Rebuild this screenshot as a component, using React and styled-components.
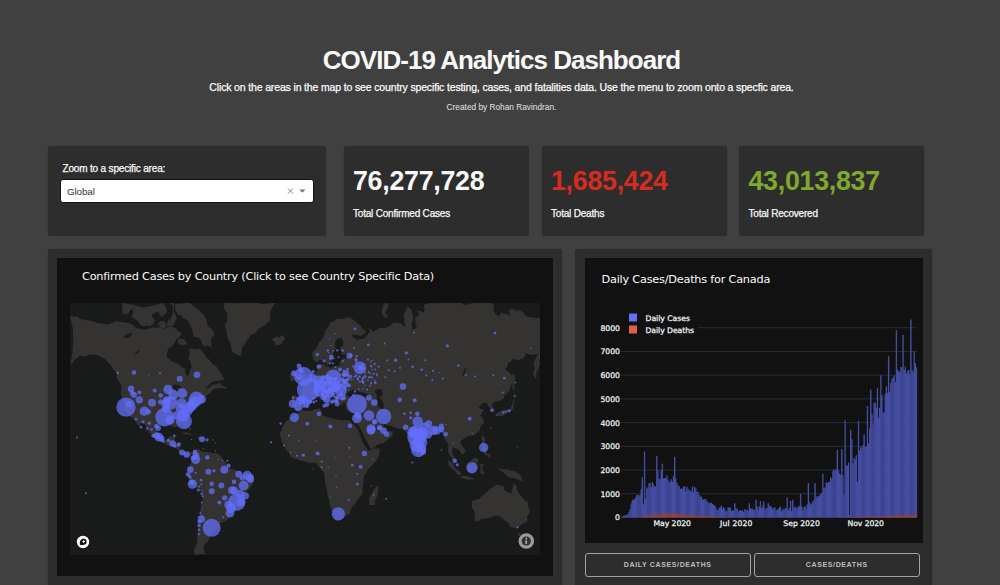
import React from 'react';
import styled, { createGlobalStyle } from 'styled-components';

const Global = createGlobalStyle`
  * { box-sizing: border-box; }
  html, body { margin: 0; padding: 0; background: #404040; overflow: hidden; }
  h1, h2, p { margin: 0; font-weight: normal; }
`;

const Page = styled.main`
  width: 1000px;
  height: 585px;
  overflow: hidden;
  padding: 45px 0 0 47.5px;
  background: #404040;
  color: #f9f9f9;
  font-family: 'Liberation Sans', Arial, sans-serif;
`;
const Header = styled.header`
  display: flex;
  flex-direction: column;
  align-items: center;
  width: 908px;
  height: 101px;
  white-space: nowrap;
`;
const Title = styled.h1`
  font-size: 26px;
  line-height: 30px;
  font-weight: bold;
  letter-spacing: -0.98px;
`;
const Subtitle = styled.p`
  margin-top: 6px;
  font-size: 10.5px;
  line-height: 13px;
  letter-spacing: -0.15px;
  -webkit-text-stroke: 0.25px #f9f9f9;
`;
const Credit = styled.p`
  margin-top: 8px;
  font-size: 8.3px;
  line-height: 10px;
  color: #e4e4e4;
`;
const Summary = styled.section`
  display: flex;
  height: 102.5px;
`;
const Card = styled.div`
  width: ${p => p.$w}px;
  height: 90px;
  margin-right: ${p => p.$gap || 0}px;
  background: #2d2d2d;
  border-radius: 3px;
  box-shadow: 0 0 1px #262626;
`;
const FilterCard = styled(Card)`
  padding: 16px 12px;
`;
const Label = styled.label`
  display: block;
  padding-left: 3px;
  height: 17px;
  font-size: 10px;
  line-height: 13px;
  letter-spacing: -0.17px;
  -webkit-text-stroke: 0.25px #f9f9f9;
`;
const Select = styled.div`
  display: flex;
  align-items: center;
  height: 24px;
  padding: 0 7px 0 6.5px;
  color: #333;
  background: #fff;
  border: 1px solid #151515;
  border-radius: 3px;
  font-size: 9.8px;
  letter-spacing: -0.1px;
`;
const SelectValue = styled.span`
  flex: 1;
`;
const StatCard = styled(Card)`
  padding: 20px 9.5px;
  color: ${p => p.$color};
`;
const Number = styled.p`
  font-size: 26.8px;
  line-height: 30px;
  font-weight: bold;
  letter-spacing: -0.28px;
`;
const Caption = styled.p`
  margin-top: 12px;
  font-size: 10px;
  line-height: 12px;
  letter-spacing: -0.2px;
  color: #f9f9f9;
  -webkit-text-stroke: 0.25px #f9f9f9;
`;
const Panels = styled.section`
  display: flex;
  gap: 13px;
`;
const Panel = styled.div`
  width: ${p => p.$w}px;
  height: 345px;
  padding: 9.5px;
  background: #2d2d2d;
  border-radius: 3px;
  box-shadow: 0 0 1px #262626;
`;
const Plot = styled.div`
  width: ${p => p.$w}px;
  height: ${p => p.$h}px;
  background: #111;
  font-family: 'DejaVu Sans', Verdana, sans-serif;
`;
const PlotTitle = styled.h2`
  height: ${p => p.$h}px;
  padding: ${p => p.$pad};
  font-size: ${p => p.$size}px;
  line-height: 14px;
  letter-spacing: ${p => p.$ls}px;
  white-space: nowrap;
`;
const MapFrame = styled.div`
  padding-left: 13px;
  svg { display: block; }
`;
const ChartSvg = styled.svg`
  display: block;
`;
const ButtonRow = styled.div`
  display: flex;
  gap: 2.5px;
  margin-top: 9.5px;
`;
const Button = styled.button`
  width: 166.5px;
  height: 24.5px;
  padding: 0;
  background: transparent;
  border: 1px solid #a2a2a2;
  border-radius: 3px;
  color: #bdbdbd;
  font: bold 7px 'Liberation Sans', Arial, sans-serif;
  letter-spacing: 0.63px;
  text-transform: uppercase;
`;

const random = seed => () => {
  seed = (seed * 1664525 + 1013904223) % 4294967296;
  return seed / 4294967296;
};

// Breaks each straight segment into small irregular coast steps.
const coast = (text, rough = 0.14) => {
  const rnd = random(text.length * 77);
  let pts = text.trim().split(/\s+/).map(p => p.split(',').map(parseFloat));
  for (let n = 0; n < 2; n++) {
    const out = [];
    pts.forEach((a, i) => {
      const b = pts[(i + 1) % pts.length];
      const k = (rnd() - 0.5) * 2 * rough;
      out.push(a, [(a[0] + b[0]) / 2 - (b[1] - a[1]) * k, (a[1] + b[1]) / 2 + (b[0] - a[0]) * k]);
    });
    pts = out;
  }
  return 'M' + pts.map(p => p[0].toFixed(1) + ' ' + p[1].toFixed(1)).join('L') + 'Z';
};

const WEST_LAND = [
  '90,212 110,212 130,222 165,230 200,238 230,226 265,232 290,248 340,245 370,250 400,245 425,262 410,280 385,310 380,335 400,350 435,368 440,395 455,365 448,310 480,310 500,338 525,360 545,385 552,402 520,408 497,430 540,412 562,428 520,432 500,450 480,460 460,485 440,515 448,548 440,550 425,537 405,545 380,535 360,540 350,560 362,578 378,585 390,570 405,573 400,590 418,595 422,615 440,623 460,620 460,628 435,633 420,618 400,602 370,590 340,575 322,550 305,530 300,540 322,560 315,555 296,540 285,525 255,495 247,460 245,430 235,405 230,380 210,355 185,335 150,328 125,330 100,350 90,362',
  '460,613 475,610 490,620 510,620 530,623 550,645 570,660 570,670 605,680 640,695 638,715 620,735 615,760 590,785 570,810 560,825 540,835 540,850 520,860 510,870 505,885 495,895 490,910 495,928 465,928 463,910 472,885 475,845 480,805 485,775 485,745 460,720 442,690 450,655 460,635',
  '245,172 248,205 262,205 280,188 275,215 300,238 330,242 345,225 335,212 352,198 365,215 378,205 372,172',
  '388,172 398,180 396,210 385,225 375,238 400,240 410,220 405,205 402,172',
  '405,175 450,172 470,190 482,200 500,230 523,262 512,282 515,305 490,302 480,280 460,272 455,250 435,220 412,208',
  '355,230 375,228 380,245 362,248',
  '415,278 435,282 442,297 425,300 412,292',
  '550,172 705,172 690,200 690,225 655,250 640,265 620,285 602,332 585,325 570,290 560,260 555,235 562,205',
  '695,280 708,272 715,276 728,268 736,280 725,295 708,300',
  '426,562 445,562 465,570 445,568',
  '472,575 492,575 495,581 474,581',
];
const EAST_LAND = [
  '98,205 97,185 112,168 128,145 140,115 152,95 175,85 205,80 225,92 245,110 256,118 256,130 240,138 215,132 230,148 252,145 270,125 268,108 280,125 300,112 330,105 345,96 360,98 378,110 370,75 380,50 395,58 400,85 396,118 410,112 404,80 418,72 408,60 430,65 432,42 460,38 545,37 560,45 600,37 640,40 645,68 655,80 665,65 690,75 690,55 720,58 735,75 780,82 783,195 775,235 768,265 760,255 762,215 772,190 738,188 730,205 700,205 675,238 702,257 690,300 665,330 640,335 635,348 645,362 632,365 622,340 605,338 596,350 612,358 600,375 612,395 600,418 580,435 550,445 540,455 558,480 545,495 530,475 520,470 518,490 532,517 510,495 505,460 490,435 475,420 440,440 430,495 415,500 395,480 380,430 360,415 320,405 298,392 315,415 338,422 335,440 300,460 270,475 245,440 222,400 226,370 200,360 195,335 180,345 165,325 145,310 160,340 140,345 125,320 95,325 80,350 50,360 35,350 35,315 65,318 70,290 55,280 75,272 100,255 112,240 110,225 130,220 140,230 155,215 142,225 132,200 112,215',
  '50,220 65,225 80,255 88,272 60,280 60,250',
  '30,250 48,245 50,265 32,272',
  '310,40 325,37 325,50 315,65 325,78 318,83 305,70',
  '645,372 660,362 685,358 698,335 705,315 713,315 702,335 698,358 680,368 655,378',
  '698,250 706,255 704,300 698,295',
];
const SEAS = [
  '170,145 185,142 190,155 180,175 184,190 212,192 215,198 188,204 178,225 150,233 142,225 155,210 160,190 165,165',
  '200,310 220,298 240,305 258,310 278,318 268,324 230,318 205,322',
  '285,300 305,297 308,315 298,318 312,345 308,358 295,350 290,325',
];
const SOUTH_LAND = [
  '337,300 375,280 390,265 410,252 435,255 432,268 455,280 460,248 475,275 505,305 510,330 500,365 475,383 450,378 440,362 420,348 385,352 345,363 345,340 335,320',
  '473,397 487,397 478,408',
  '412,205 430,207 450,210 470,215 485,235 497,243 475,238 450,232 432,218',
  '320,190 345,170 357,178 350,205 340,218 322,210',
  '255,173 280,190 305,222 295,225 270,200',
  '302,228 342,234 340,238 302,232',
  '358,190 378,192 366,198 375,220 362,220',
  '365,108 375,110 372,130 380,160 392,162 388,172 372,160 364,130',
  '55,255 55,275 45,312 28,314 27,295 38,275',
  '365,93 370,90 369,102',
];
const AFRICA = '290,417 302,410 320,408 322,415 333,418 350,420 355,425 362,440 368,450 380,448 379,455 372,465 364,475 363,492 357,500 350,513 342,519 335,520 332,510 327,490 324,472 316,462 300,460 290,455 282,442 280,433 285,422';

const AMERICAS = [[173,37,4],[222,36,7],[266,43,2],[300,38,3],[359,55,9],[411,43,10],[213,85,10],[222,103,9],[216,97,7],[238,96,6],[238,118,11],[198,140,29],[208,131,10],[284,90,6],[302,105,7],[276,127,12],[302,124,8],[253,152,14],[265,154,8],[324,87,14],[340,103,15],[367,98,15],[332,127,20],[318,130,14],[320,120,12],[314,170,28],[330,178,14],[365,128,15],[362,145,15],[380,150,18],[372,182,24],[370,165,18],[395,135,16],[409,115,22],[425,116,13],[402,125,18],[390,140,16],[350,165,12],[318,145,12],[228,176,4],[249,184,5],[268,188,5],[262,204,4],[275,207,4],[289,197,7],[295,203,8],[243,200,4],[297,230,13],[290,225,10],[305,235,9],[280,226,6],[325,240,5],[343,226,4],[338,249,10],[344,257,5],[356,252,7],[366,276,9],[380,282,10],[310,243,4],[391,205,2],[395,237,2],[426,236,9],[441,238,5],[458,238,2],[465,247,2],[466,271,2],[430,265,2],[51,231,3],[78,398,3],[633,245,3],[405,275,7],[408,285,10],[407,297,14],[400,292,8],[442,291,7],[391,327,10],[384,342,7],[390,350,5],[397,371,14],[395,365,8],[445,334,9],[462,331,5],[493,328,12],[506,315,6],[488,300,2],[502,301,3],[475,297,2],[407,337,3],[423,359,4],[424,372,3],[455,370,7],[455,392,9],[484,375,9],[536,341,10],[562,345,14],[570,352,12],[572,358,10],[547,352,8],[522,364,7],[551,375,15],[516,389,12],[523,390,11],[540,400,12],[556,406,11],[530,425,26],[543,425,13],[505,433,12],[513,443,15],[510,458,13],[494,412,8],[478,426,6],[425,400,4],[428,407,3],[415,389,4],[417,378,3],[427,390,2],[425,426,3],[426,445,2],[421,458,3],[424,475,11],[455,502,27],[418,484,6],[417,495,5],[417,508,4],[417,521,3],[490,470,3]];
const EURASIA = [[225,115,4],[265,163,4],[314,159,3],[402,126,3],[165,129,2],[148,145,2],[153,165,2],[222,172,3],[188,180,4],[112,192,5],[154,200,7],[208,196,9],[213,195,5],[132,211,5],[57,226,7],[117,228,7],[180,237,6],[198,247,9],[240,232,19],[242,232,9],[379,187,5],[347,209,5],[322,209,3],[385,207,3],[436,209,3],[502,166,5],[645,128,4],[753,174,2],[535,225,4],[398,229,4],[344,242,3],[360,232,3],[425,238,4],[459,241,3],[477,247,2],[439,255,3],[457,269,3],[488,264,3],[557,254,3],[585,258,3],[640,254,3],[673,263,4],[706,276,3],[780,220,2],[658,284,1.5],[668,306,3],[703,316,3],[369,288,10],[359,328,7],[404,329,6],[636,359,5],[687,361,5],[670,366,4],[677,364,3],[650,373,2],[569,385,6],[326,239,3],[316,260,3],[70,257,28],[57,260,9],[42,248,9],[62,240,8],[85,298,34],[160,260,23],[97,262,12],[115,270,15],[120,285,18],[118,300,18],[140,270,15],[145,290,20],[165,290,15],[182,299,18],[150,310,12],[135,310,12],[172,285,15],[195,280,10],[140,325,12],[187,320,10],[171,341,7],[130,320,9],[133,346,6],[38,340,12],[55,350,12],[60,330,13],[75,330,10],[68,322,8],[40,322,4],[85,335,8],[43,381,14],[117,370,7],[82,400,6],[151,408,6],[210,406,7],[231,341,30],[267,322,9],[283,336,10],[267,375,16],[311,378,23],[231,383,15],[234,375,10],[284,394,7],[273,415,14],[299,411,7]];
const MIDDLE = [[303,270,13],[314,244,8],[329,262,8],[341,271,10],[350,281,8],[407,260,8],[403,220,4],[422,217,4],[442,220,7],[422,232,5],[283,339,8],[272,379,6],[247,374,4],[238,322,3],[143,339,6],[100,344,5],[81,346,3],[62,336,2],[57,285,3],[87,300,2],[42,315,3],[32,249,4],[3,305,2],[155,380,3],[155,363,3],[175,380,2],[140,300,1.5],[197,350,1.5],[240,349,2],[308,323,1.5],[443,243,16],[463,262,16],[476,250,11],[437,275,20],[440,290,28],[455,280,20],[428,275,16],[450,305,22],[445,328,22],[455,325,14],[460,335,8],[474,283,12],[490,270,14],[500,270,13],[514,257,8],[527,281,7],[515,267,8],[427,366,3],[440,315,20],[515,328,1.5],[205,520,20],[262,431,4],[180,470,2],[200,440,2],[236,478,3],[262,400,3],[130,385,2],[198,405,2]];
const SOUTH = [[38,176,2],[34,256,2],[41,283,3],[79,295,3],[284,181,7],[292,193,5],[336,202,17],[371,141,14],[472,139,2],[392,82,2],[337,98,2],[280,128,2],[244,149,2],[259,72,2],[473,380,3],[500,358,2]];

const scatter = (seed, count, x, y, w, h, r0, r1) => {
  const rnd = random(seed);
  return Array.from({ length: count }, () => [x + (rnd() + rnd()) / 2 * w, y + (rnd() + rnd()) / 2 * h, r0 + rnd() * (r1 - r0)]);
};
const SMALL = [
  ...scatter(11, 60, 95, 235, 130, 115, 3, 7),
  ...scatter(29, 45, 180, 195, 120, 115, 2, 4),
  ...scatter(5, 22, 225, 190, 90, 125, 2, 3.5),
  ...scatter(47, 12, 120, 165, 60, 70, 2, 4),
  ...scatter(61, 18, 35, 310, 75, 45, 3, 6),
];

const Bubbles = ({ at, data }) => (
  <g transform={`translate(${at}) scale(0.33333)`} fill="#636efa" fillOpacity="0.74">
    {data.map(([x, y, r], i) => <circle key={i} cx={x} cy={y} r={r} />)}
  </g>
);
const Land = ({ at, shapes, fill = '#343332' }) => (
  <g transform={`translate(${at}) scale(0.33333)`} fill={fill}>
    {shapes.map((s, i) => <path key={i} d={coast(s)} />)}
  </g>
);

const WorldMap = () => (
  <svg width="470" height="252" viewBox="70 302.5 470 252">
    <rect x="70" y="302" width="471" height="253" fill="#191a1a" />
    <Land at="40 245" shapes={WEST_LAND} />
    <Land at="280 290" shapes={EAST_LAND} />
    <path d={coast(AFRICA, 0.1)} fill="#343332" />
    <Land at="280 290" shapes={SEAS} fill="#191a1a" />
    <path d="M356 423 361 432 369 448" stroke="#191a1a" strokeWidth="2.6" fill="none" />
    <Land at="360 400" shapes={SOUTH_LAND} />
    <g fill="#191a1a">
      <path d="M123 336l8-4 1 2-4 4zM134 353l5-3 1 1-3 2zM171 387l4-3 5 1 2 3-4-1-1 5-2-3z" />
      <path d="M462 375l3-8 1 1-2 7z" />
    </g>
    <Bubbles at="60 360" data={AMERICAS} />
    <Bubbles at="280 290" data={EURASIA} />
    <Bubbles at="280 290" data={SMALL} />
    <Bubbles at="270 340" data={MIDDLE} />
    <Bubbles at="360 400" data={SOUTH} />
    <circle cx="83" cy="541.5" r="6.2" fill="#fff" />
    <path d="M80 544.3c-.6-3.6.8-6 3.6-6a3 3 0 0 1 0 6c-1.200.3-2.400.2-3.600 0z" fill="#111" />
    <path d="M83.700 539.300l.6 1.300 1.300.6-1.300.6-.6 1.300-.6-1.300-1.300-.6 1.300-.6z" fill="#fff" />
    <circle cx="526.300" cy="540.500" r="7.800" fill="#9b9b9b" />
    <circle cx="526.300" cy="540.500" r="4.600" fill="#303030" />
    <circle cx="526.300" cy="538" r="0.9" fill="#aaa" />
    <path d="M525.300 539.800h1.800v3.600h-1.800z" fill="#aaa" />
  </svg>
);

const ENVELOPE = [[155,40],[175,150],[185,620],[210,1050],[240,1350],[270,1550],[290,1600],[310,1650],[340,1200],[375,1180],[400,800],[440,420],[500,300],[540,350],[600,400],[640,350],[690,370],[720,520],[745,950],[775,1450],[795,1950],[820,1950],[860,2500],[890,3000],[900,3900],[920,4500],[945,4850],[965,5650],[980,6000],[1000,6250],[1020,6150],[1041,6500]];
const PEAKS = [[216,1700],[225,2780],[221,550],[228,800],[260,2600],[264,2000],[278,2270],[273,2000],[313,2560],[493,600],[537,600],[558,750],[571,700],[582,680],[593,600],[651,850],[660,700],[669,750],[690,1000],[716,1450],[736,1450],[757,1850],[802,2850],[814,2880],[827,4100],[843,3700],[847,3300],[867,4080],[883,3500],[902,5400],[893,4700],[921,5450],[912,4850],[934,6000],[957,6800],[969,5900],[978,7900],[1000,7700],[1023,8350],[1032,7000],[838,100],[823,950],[863,1500]];
const DAYS = (() => {
  const rnd = random(42);
  const step = 886 / 265;
  const list = Array.from({ length: 265 }, (_, i) => {
    const x = 155 + (i + 0.5) * step;
    let j = 0;
    while (j < ENVELOPE.length - 2 && ENVELOPE[j + 1][0] < x) j++;
    const [a, va] = ENVELOPE[j], [b, vb] = ENVELOPE[j + 1];
    const spread = x > 440 && x < 720 ? 0.6 : x > 950 ? 0.08 : 0.22;
    return (va + (vb - va) * Math.min(1, (x - a) / (b - a))) * (1 + (rnd() - 0.5) * spread);
  });
  PEAKS.forEach(([x, v]) => { list[Math.min(264, Math.floor((x - 155) / step))] = v; });
  return list;
})();
const deaths = i => {
  if (i < 18) return 0;
  const wave = 150 * Math.exp(-(((i - 42) / 22) ** 2)) + 35 * Math.exp(-(((i - 75) / 15) ** 2));
  return wave * (0.7 + ((i * 37) % 11) / 16) + Math.max(0, i - 195) * 1.45 + 4;
};
const X0 = 621.7, BASE = 518, UNIT = 0.02372, STEP = 295.3 / 265;

const DailyChart = () => (
  <ChartSvg width="338" height="245" viewBox="585 298.5 338 245" fontFamily="'DejaVu Sans', Verdana, sans-serif" fontSize="7.7" fill="#f2f5fa">
    {[0,1,2,3,4,5,6,7,8].map(n => (
      <g key={n}>
        <path d={`M${n === 8 ? 698 : 621} ${BASE - n * 1000 * UNIT}H917`} stroke="#232d38" strokeWidth="1" />
        <text x="620" y={BASE - n * 1000 * UNIT + 2.9} textAnchor="end" stroke="#f2f5fa" strokeWidth="0.25">{n * 1000}</text>
      </g>
    ))}
    {DAYS.map((v, i) => <rect key={i} x={X0 + i * STEP - 0.1} y={BASE - v * UNIT} width={STEP + 0.25} height={v * UNIT} fill={i % 2 ? '#4750a8' : '#434b9f'} />)}
    {DAYS.map((v, i) => <rect key={i} x={X0 + i * STEP} y={BASE - deaths(i) * UNIT} width={STEP + 0.04} height={deaths(i) * UNIT} fill="#a0402d" />)}
    <rect x="629" y="314" width="8" height="8" fill="#636efa" />
    <rect x="629" y="326" width="8" height="8" fill="#e35f43" />
    <g stroke="#f2f5fa" strokeWidth="0.25">
      <text x="645.500" y="321" textLength="44.500">Daily Cases</text>
      <text x="645.500" y="333" textLength="48.500">Daily Deaths</text>
      <text x="653.500" y="526.700" textLength="37.500">May 2020</text>
      <text x="720" y="526.700" textLength="32.500">Jul 2020</text>
      <text x="783.300" y="526.700" textLength="36.500">Sep 2020</text>
      <text x="847.500" y="526.700" textLength="36.500">Nov 2020</text>
    </g>
  </ChartSvg>
);

const STATS = [
  { value: '76,277,728', label: 'Total Confirmed Cases', color: '#f9f9f9', w: 185, gap: 13 },
  { value: '1,685,424', label: 'Total Deaths', color: '#d62c20', w: 185, gap: 12.5 },
  { value: '43,013,837', label: 'Total Recovered', color: '#7fa82f', w: 185 },
];

export default function App() {
  return (
    <>
      <Global />
      <Page>
        <Header>
          <Title>COVID-19 Analytics Dashboard</Title>
          <Subtitle>Click on the areas in the map to see country specific testing, cases, and fatalities data. Use the menu to zoom onto a specfic area.</Subtitle>
          <Credit>Created by Rohan Ravindran.</Credit>
        </Header>
        <Summary>
          <FilterCard $w={278.5} $gap={17.5}>
            <Label>Zoom to a specific area:</Label>
            <Select>
              <SelectValue>Global</SelectValue>
              <svg width="22" height="10" viewBox="0 0 22 10">
                <path d="M4 2.500l5 5m0-5l-5 5" stroke="#777" strokeWidth="0.9" />
                <path d="M15.300 3.500h6.200l-3.100 3.200z" fill="#777" />
              </svg>
            </Select>
          </FilterCard>
          {STATS.map(s => (
            <StatCard key={s.label} $w={s.w} $gap={s.gap} $color={s.color}>
              <Number>{s.value}</Number>
              <Caption>{s.label}</Caption>
            </StatCard>
          ))}
        </Summary>
        <Panels>
          <Panel $w={514.5}>
            <Plot $w={496} $h={318}>
              <PlotTitle $h={44.5} $pad="12px 0 0 25px" $size={11.3} $ls={-0.22}>Confirmed Cases by Country (Click to see Country Specific Data)</PlotTitle>
              <MapFrame><WorldMap /></MapFrame>
            </Plot>
          </Panel>
          <Panel $w={357}>
            <Plot $w={338} $h={285}>
              <PlotTitle $h={40} $pad="15px 0 0 17px" $size={11.3} $ls={-0.23}>Daily Cases/Deaths for Canada</PlotTitle>
              <DailyChart />
            </Plot>
            <ButtonRow>
              <Button>Daily Cases/Deaths</Button>
              <Button>Cases/Deaths</Button>
            </ButtonRow>
          </Panel>
        </Panels>
      </Page>
    </>
  );
}
